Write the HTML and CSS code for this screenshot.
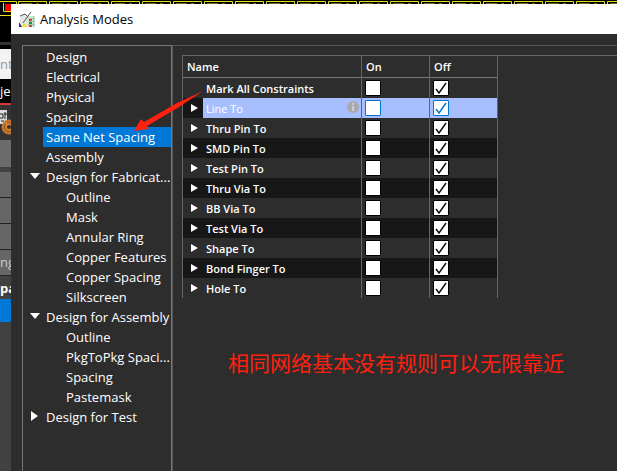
FILE: index.html
```
<!DOCTYPE html>
<html lang="en">
<head>
    <meta charset="utf-8">
    <title>Analysis Modes</title>
    <link rel="stylesheet" href="styles.css">
</head>
<body>
    <div class="traces">
        <svg width="100%" height="4">
            <defs>
                <pattern id="pads" x="17" y="0" width="31" height="16" patternUnits="userSpaceOnUse">
                    <path d="M1.5 16V1.5H29.5V16" fill="none" stroke="#e4e013"/>
                    <path d="M4 3.5h11M19 3.5h3" stroke="#6b6a1a"/>
                </pattern>
            </defs>
            <rect width="100%" height="4" fill="url(#pads)"/>
            <rect width="17" height="4" fill="#000"/>
            <path d="M0 1.5H16.5V4M3.5 3V4" fill="none" stroke="#e4e013"/>
        </svg>
    </div>
    <div class="desktop">
        <div class="behind">
            <div class="strip-black">
                <svg width="11" height="38">
                    <path d="M3.5 0V7.5H11M0 11.5H11" fill="none" stroke="#e4e013"/>
                    <rect x="5" y="0" width="6" height="7" fill="#f00"/>
                </svg>
            </div>
            <div class="strip-white">nt</div>
            <div class="strip-tab">je</div>
            <div class="strip-icon">
                <svg width="11" height="35">
                    <rect x="0" y="5" width="7" height="14" fill="#ddd"/>
                    <path d="M0 9h3v4H0M5 7v7M4 9h3M1 16h3" fill="none" stroke="#222"/>
                    <circle cx="9" cy="22" r="6" fill="none" stroke="#c4752b" stroke-width="3"/>
                    <circle cx="9" cy="22" r="3" fill="none" stroke="#d9822b" stroke-width="2"/>
                </svg>
            </div>
            <div class="strip-grey"></div>
            <div class="strip-cell"></div>
            <div class="strip-cell"></div>
            <div class="strip-cell"></div>
            <div class="strip-cell">ng</div>
            <div class="strip-head">pa</div>
            <div class="strip-blue"></div>
        </div>
        <div class="dialog">
            <header class="title-bar">
                <svg class="app-icon" width="18" height="17" viewBox="0 0 18 17">
                    <path d="M1 5l4-2 5 1v12H1z" fill="#e4e4e4"/>
                    <path d="M9 5h7v11H9z" fill="#d3e8d6"/>
                    <path d="M9 7.5h7M9 10.5h7M9 13.5h7M14.5 5v11" stroke="#9cc9a4"/>
                    <path d="M10 8h3v2h-3z" fill="#e33"/>
                    <path d="M10 11h3v2h-3z" fill="#159447"/>
                    <path d="M10 14h3v2h-3z" fill="#e33"/>
                    <path d="M0 11l3 5H0z" fill="#26269a"/>
                    <path d="M3 15l3-3 2 3-1 1H3z" fill="#eee52b"/>
                    <path d="M12 1L4 12M1 5l5-2 3 3" fill="none" stroke="#555"/>
                </svg>
                <h1>Analysis Modes</h1>
            </header>
            <div class="content">
                <nav class="tree">
                    <ul>
                        <li>Design</li>
                        <li>Electrical</li>
                        <li>Physical</li>
                        <li>Spacing</li>
                        <li class="selected">Same Net Spacing</li>
                        <li>Assembly</li>
                        <li class="open">Design for Fabricat...</li>
                        <li class="child">Outline</li>
                        <li class="child">Mask</li>
                        <li class="child">Annular Ring</li>
                        <li class="child">Copper Features</li>
                        <li class="child">Copper Spacing</li>
                        <li class="child">Silkscreen</li>
                        <li class="open">Design for Assembly</li>
                        <li class="child">Outline</li>
                        <li class="child">PkgToPkg Spaci...</li>
                        <li class="child">Spacing</li>
                        <li class="child">Pastemask</li>
                        <li class="closed">Design for Test</li>
                    </ul>
                </nav>
                <main class="panel">
                    <div class="grid">
                        <table>
                            <colgroup>
                                <col class="col-expand">
                                <col>
                                <col class="col-check">
                                <col class="col-check">
                            </colgroup>
                            <thead>
                                <tr><th colspan="2">Name</th><th>On</th><th>Off</th></tr>
                            </thead>
                            <tbody id="rows"></tbody>
                        </table>
                    </div>
                    <p class="note">相同网络基本没有规则可以无限靠近</p>
                </main>
            </div>
            <svg class="arrow" width="72" height="44">
                <path d="M71 0L45 12L12 31L9 28L2 40L17 38L15 35L47 16Z" fill="#ff2010"/>
            </svg>
        </div>
    </div>
    <script src="script.js"></script>
</body>
</html>
```
FILE: styles.css
```
* {
    box-sizing: border-box;
}
body {
    margin: 0;
    min-height: 100vh;
    display: flex;
    flex-direction: column;
    background: #000;
    color: #fff;
    font-family: "Open Sans", "Noto Sans CJK SC", sans-serif;
    font-size: 13px;
}
.traces {
    height: 4px;
}
svg {
    display: block;
}
.desktop {
    flex: 1;
    display: flex;
}
.behind {
    width: 11px;
    display: flex;
    flex-direction: column;
    overflow: hidden;
    background: #414141;
    line-height: 24px;
}
.strip-black {
    height: 45px;
    background: #333;
    border-bottom: 4px solid #000;
}
.strip-black svg {
    background: #000;
}
.strip-white {
    height: 30px;
    background: #f3f3f3;
    color: #999;
    line-height: 30px;
}
.strip-tab {
    height: 26px;
    background: #000;
    border-bottom: 2px solid #d23c3c;
}
.strip-icon {
    height: 35px;
    background: #333;
}
.strip-grey {
    height: 27px;
    margin-bottom: 5px;
    background: #6b6b6b;
}
.strip-cell {
    height: 26px;
    background: #666;
    border-bottom: 1px solid #222;
    color: #ccc;
}
.strip-head {
    height: 23px;
    font-weight: bold;
}
.strip-blue {
    height: 23px;
    background: #0078d7;
}
.dialog {
    position: relative;
    flex: 1;
    min-width: 0;
    display: flex;
    flex-direction: column;
    background: #2d2d2d;
}
.title-bar {
    height: 30px;
    display: flex;
    align-items: center;
    gap: 3px;
    padding-left: 8px;
    background: #fff;
    color: #000;
}
.title-bar h1 {
    margin: 0;
    font-size: 13px;
    font-weight: normal;
}
.content {
    flex: 1;
    display: flex;
    margin-top: 11px;
    padding-left: 11px;
}
.tree {
    width: 150px;
    padding-top: 1px;
    border: 1px solid #777;
    border-width: 1px 1px 0;
}
.tree ul {
    margin: 0;
    padding: 0;
    list-style: none;
}
.tree li {
    position: relative;
    margin-left: 20px;
    padding-left: 3px;
    line-height: 20px;
    white-space: nowrap;
}
.tree .selected {
    background: #0078d7;
}
.tree .child {
    margin-left: 40px;
}
.tree .open,
.tree .closed {
    margin-left: 0;
    padding-left: 23px;
}
.open::before,
.closed::before {
    content: "";
    position: absolute;
    left: 7px;
    top: 6px;
    border: 5px solid transparent;
    border-top: 6px solid #fff;
    border-bottom: 0;
}
.closed::before {
    left: 8px;
    top: 4px;
    border: 5px solid transparent;
    border-left: 7px solid #fff;
    border-right: 0;
}
.panel {
    flex: 1;
    padding: 9px 0 0 9px;
    border: 1px solid #555;
    border-width: 1px 0 0 1px;
}
.grid {
    border-top: 1px solid #666;
}
table {
    width: 316px;
    border-collapse: separate;
    border-spacing: 0;
    table-layout: fixed;
    border-left: 1px solid #666;
    font-size: 11px;
    font-weight: 600;
}
.col-expand {
    width: 20px;
}
.col-check {
    width: 68px;
}
th {
    height: 22px;
    padding: 0 4px;
    text-align: left;
    font-weight: 600;
    border-right: 1px solid #666;
    border-bottom: 1px solid #777;
}
td {
    height: 20px;
    padding: 0 0 0 3px;
    border-right: 1px solid #666;
    white-space: nowrap;
}
td.expand {
    padding: 0 0 0 8px;
    border: 0;
}
tbody tr:nth-child(even) {
    background: #171717;
}
.line {
    display: flex;
    align-items: center;
    justify-content: space-between;
    padding-right: 1px;
}
.active td {
    background: #a8bfff;
    font-weight: normal;
}
.active td.expand {
    background: #171717;
}
td input {
    display: block;
    appearance: none;
    width: 16px;
    height: 16px;
    margin: 0;
    border: 1px solid #000;
    border-radius: 1px;
    background: #fff;
}
td input:checked {
    background: #fff url("data:image/svg+xml,%3Csvg xmlns='http://www.w3.org/2000/svg' viewBox='0 0 14 14'%3E%3Cpath d='M2 8l3 4 7-10' fill='none' stroke='%23111' stroke-width='1.5'/%3E%3C/svg%3E");
}
.active input {
    border-color: #0078d7;
}
.active input:checked {
    background: #fff url("data:image/svg+xml,%3Csvg xmlns='http://www.w3.org/2000/svg' viewBox='0 0 14 14'%3E%3Cpath d='M2 8l3 4 7-10' fill='none' stroke='%230078d7' stroke-width='1.5'/%3E%3C/svg%3E");
}
.note {
    margin: 50px 0 0 46px;
    color: #ff2010;
    font-size: 21px;
    line-height: 30px;
    white-space: nowrap;
}
.arrow {
    position: absolute;
    left: 121px;
    top: 87px;
}
```
FILE: script.js
```
var names = ['Mark All Constraints', 'Line To', 'Thru Pin To', 'SMD Pin To', 'Test Pin To', 'Thru Via To',
    'BB Via To', 'Test Via To', 'Shape To', 'Bond Finger To', 'Hole To'];
var rows = document.getElementById('rows');

names.forEach(function (name, i) {
    var tr = document.createElement('tr');
    var icon = '';
    var info = '';
    if (i > 0) {
        icon = '<svg width="8" height="8"><path d="M0 0L7 4L0 8z" fill="#fff"/></svg>';
    }
    if (name === 'Line To') {
        tr.className = 'active';
        info = '<svg width="14" height="14"><circle cx="7" cy="6" r="6" fill="#aaa"/><path d="M7 2v2M7 5v5" stroke="#ccd" stroke-width="2"/></svg>';
    }
    tr.innerHTML = '<td class="expand">' + icon + '</td>' +
        '<td><div class="line">' + name + info + '</div></td>' +
        '<td><input type="checkbox" aria-label="' + name + ' on"></td>' +
        '<td><input type="checkbox" aria-label="' + name + ' off" checked></td>';
    rows.appendChild(tr);
});
```
